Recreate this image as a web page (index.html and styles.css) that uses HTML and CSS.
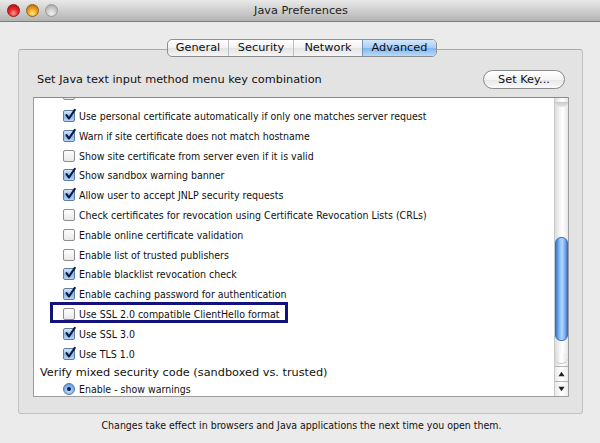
FILE: index.html
```html
<!DOCTYPE html>
<html>
<head>
<meta charset="utf-8">
<link rel="stylesheet" href="styles.css">
</head>
<body>
<div class="window">
  <div class="titlebar">
    <div class="lights">
      <span class="light red"></span>
      <span class="light orange"></span>
      <span class="light gray"></span>
    </div>
    <div class="title">Java Preferences</div>
  </div>
  <div class="content">
    <div class="tabs">
      <div class="tab t1">General</div>
      <div class="tab t2">Security</div>
      <div class="tab t3">Network</div>
      <div class="tab t4 sel">Advanced</div>
    </div>
    <div class="group">
      <div class="keyrow">
        <span class="keylabel">Set Java text input method menu key combination</span>
        <button class="btn">Set Key...</button>
      </div>
      <div class="list">
        <div class="items">
          <div class="row first"><span class="cb"></span></div>
          <div class="row"><span class="cb on"><svg viewBox="0 0 14 14"><path d="M3.5 7.2 L6 10.5 L11.8 1.8" /></svg></span><span>Use personal certificate automatically if only one matches server request</span></div>
          <div class="row"><span class="cb on"><svg viewBox="0 0 14 14"><path d="M3.5 7.2 L6 10.5 L11.8 1.8" /></svg></span><span>Warn if site certificate does not match hostname</span></div>
          <div class="row"><span class="cb"></span><span>Show site certificate from server even if it is valid</span></div>
          <div class="row"><span class="cb on"><svg viewBox="0 0 14 14"><path d="M3.5 7.2 L6 10.5 L11.8 1.8" /></svg></span><span>Show sandbox warning banner</span></div>
          <div class="row"><span class="cb on"><svg viewBox="0 0 14 14"><path d="M3.5 7.2 L6 10.5 L11.8 1.8" /></svg></span><span>Allow user to accept JNLP security requests</span></div>
          <div class="row"><span class="cb"></span><span>Check certificates for revocation using Certificate Revocation Lists (CRLs)</span></div>
          <div class="row"><span class="cb"></span><span>Enable online certificate validation</span></div>
          <div class="row"><span class="cb"></span><span>Enable list of trusted publishers</span></div>
          <div class="row"><span class="cb on"><svg viewBox="0 0 14 14"><path d="M3.5 7.2 L6 10.5 L11.8 1.8" /></svg></span><span>Enable blacklist revocation check</span></div>
          <div class="row"><span class="cb on"><svg viewBox="0 0 14 14"><path d="M3.5 7.2 L6 10.5 L11.8 1.8" /></svg></span><span>Enable caching password for authentication</span></div>
          <div class="row hl"><span class="cb"></span><span>Use SSL 2.0 compatible ClientHello format</span></div>
          <div class="row"><span class="cb on"><svg viewBox="0 0 14 14"><path d="M3.5 7.2 L6 10.5 L11.8 1.8" /></svg></span><span>Use SSL 3.0</span></div>
          <div class="row"><span class="cb on"><svg viewBox="0 0 14 14"><path d="M3.5 7.2 L6 10.5 L11.8 1.8" /></svg></span><span>Use TLS 1.0</span></div>
          <div class="heading">Verify mixed security code (sandboxed vs. trusted)</div>
          <div class="row radio-row"><span class="radio"><span class="dot"></span></span><span>Enable - show warnings</span></div>
        </div>
        <div class="scrollbar">
          <div class="track">
            <div class="cap"></div>
            <div class="thumb"></div>
            <div class="trackend"></div>
          </div>
          <div class="arrow up"><svg viewBox="0 0 8 6"><path d="M4 0.5 L7.5 5.5 L0.5 5.5 Z"/></svg></div>
          <div class="arrow down"><svg viewBox="0 0 8 6"><path d="M0.5 0.5 L7.5 0.5 L4 5.5 Z"/></svg></div>
        </div>
      </div>
    </div>
    <div class="footer">Changes take effect in browsers and Java applications the next time you open them.</div>
  </div>
</div>
</body>
</html>
```

FILE: styles.css
```css
html, body {
  margin: 0;
  padding: 0;
}
body {
  width: 600px;
  height: 443px;
  overflow: hidden;
  background: #ebebeb;
  font-family: "DejaVu Sans", "Liberation Sans", sans-serif;
  color: #111;
}
.window {
  width: 600px;
  height: 443px;
  display: flex;
  flex-direction: column;
}
.titlebar {
  height: 21px;
  border-bottom: 1px solid #7c7c7c;
  background: linear-gradient(#e9e9e9, #cfcfcf 50%, #b3b3b3);
  position: relative;
  display: flex;
  align-items: center;
  justify-content: center;
}
.lights {
  position: absolute;
  left: 7px;
  top: 4px;
  display: flex;
  gap: 6px;
}
.light {
  width: 13px;
  height: 13px;
  border-radius: 50%;
  box-sizing: border-box;
}
.light.red {
  background: radial-gradient(circle at 50% 75%, #ff9a8a 0%, #e8262a 45%, #9a0e10 100%);
  border: 1px solid #8c1a1a;
}
.light.orange {
  background: radial-gradient(circle at 50% 75%, #ffe98a 0%, #f0a21c 45%, #a46407 100%);
  border: 1px solid #946019;
}
.light.gray {
  background: radial-gradient(circle at 50% 75%, #f2f2f2 0%, #c9c9c9 50%, #9d9d9d 100%);
  border: 1px solid #989898;
}
.title {
  font-size: 11.3px;
  color: #222;
  padding-left: 2px;
}
.content {
  flex: 1;
  display: flex;
  flex-direction: column;
  padding: 17px 17px 0 18px;
}
.tabs {
  display: flex;
  align-self: center;
  margin-left: 3px;
  height: 18px;
  margin-bottom: -8px;
  position: relative;
  z-index: 2;
  border: 1px solid #8e8e8e;
  border-radius: 5px;
  overflow: hidden;
  box-sizing: border-box;
  background: linear-gradient(#ffffff, #f1f1f1 50%, #e3e3e3 51%, #f5f5f5);
}
.tab {
  font-size: 11.3px;
  line-height: 16px;
  text-align: center;
  border-left: 1px solid #bdbdbd;
  color: #111;
  box-sizing: border-box;
}
.t1 { width: 60px; border-left: none; }
.t2 { width: 65px; }
.t3 { width: 69px; }
.t4 { width: 74px; }
.tab.sel {
  background: linear-gradient(#d4e6fa, #a6cdf4 50%, #7fb6ef 51%, #b8dbfa);
  border-left: 1px solid #6f95c4;
}
.group {
  height: 365px;
  box-sizing: border-box;
  border: 1px solid #c2c2c2;
  border-top-color: #ababab;
  border-radius: 3px;
  background: #e3e3e3;
  padding: 20px 17px 0 14px;
  display: flex;
  flex-direction: column;
}
.keyrow {
  display: flex;
  align-items: center;
  justify-content: space-between;
  height: 19px;
  padding-left: 4px;
}
.keylabel {
  font-size: 11.3px;
}
.btn {
  font-family: inherit;
  font-size: 11.3px;
  height: 19px;
  width: 82px;
  padding: 0;
  border: 1px solid #8a8a8a;
  border-radius: 10px;
  background: linear-gradient(#ffffff, #f4f4f4 50%, #e6e6e6 51%, #fafafa);
  color: #111;
}
.list {
  margin-top: 8px;
  margin-right: -4px;
  height: 300px;
  box-sizing: border-box;
  border: 1px solid #9d9d9d;
  border-top-color: #8a8a8a;
  background: #fff;
  display: flex;
  overflow: hidden;
}
.items {
  flex: 1;
  margin-top: -12.5px;
  overflow: hidden;
}
.row {
  height: 19.8px;
  display: flex;
  align-items: center;
  font-family: "DejaVu Sans Condensed", "DejaVu Sans", sans-serif;
  font-size: 10.5px;
  padding-left: 29px;
  gap: 4px;
  position: relative;
}
.row.first {
  height: 20.6px;
  align-items: flex-start;
  padding-top: 2.5px;
  box-sizing: border-box;
}
.cb {
  width: 12px;
  height: 12px;
  box-sizing: border-box;
  border: 1px solid #8d8d8d;
  border-radius: 2px;
  background: linear-gradient(#fdfdfd, #e9e9e9);
  position: relative;
  flex: none;
}
.cb.on {
  border-color: #5f7ca0;
  background: linear-gradient(#d6e6f8, #8fb9e8 55%, #b7d5f5);
}
.cb svg {
  position: absolute;
  left: -1px;
  top: -3px;
  width: 14px;
  height: 14px;
  overflow: visible;
}
.cb svg path {
  fill: none;
  stroke: #0c1b46;
  stroke-width: 2.1;
  stroke-linecap: round;
  stroke-linejoin: round;
}
.row.hl::after {
  content: "";
  position: absolute;
  left: 16px;
  top: -2px;
  width: 238px;
  height: 21px;
  border: 3px solid #12127e;
  box-sizing: border-box;
}
.heading {
  font-size: 11.3px;
  height: 18px;
  display: flex;
  align-items: center;
  padding-left: 6px;
}
.radio-row {
  height: 16px;
}
.radio {
  width: 12px;
  height: 12px;
  box-sizing: border-box;
  border-radius: 50%;
  border: 1px solid #5677a3;
  background: radial-gradient(circle at 50% 70%, #c7e0fa, #6ea7e6 70%, #4f86cc);
  display: flex;
  align-items: center;
  justify-content: center;
  flex: none;
}
.radio .dot {
  width: 4px;
  height: 4px;
  border-radius: 50%;
  background: #0d1b3e;
}
.scrollbar {
  width: 13px;
  flex: none;
  display: flex;
  flex-direction: column;
  border-left: 1px solid #c9c9c9;
  background: linear-gradient(90deg, #dcdcdc, #f7f7f7 40%, #ffffff 60%, #e6e6e6);
}
.track {
  flex: 1;
  display: flex;
  flex-direction: column;
}
.cap {
  height: 5px;
  margin-top: 4px;
  background: linear-gradient(#c8c8c8, #e8e8e8);
  border-radius: 0 0 6px 6px;
}
.thumb {
  margin-top: 130px;
  height: 104px;
  border-radius: 6px;
  border: 1px solid #3a6fc0;
  box-sizing: border-box;
  background: linear-gradient(90deg, #3d78d6, #8ec0f4 35%, #b4d7fb 55%, #6fa7ec 85%, #3f75cc);
}
.trackend {
  margin-top: auto;
  height: 10px;
  border-radius: 0 0 6px 6px;
  background: linear-gradient(90deg, #d8d8d8, #ffffff 50%, #e2e2e2);
  border-bottom: 1px solid #c8c8c8;
  margin-bottom: 2px;
}
.arrow {
  height: 15px;
  box-sizing: border-box;
  border-top: 1px solid #b5b5b5;
  display: flex;
  align-items: center;
  justify-content: center;
  background: linear-gradient(90deg, #e9e9e9, #ffffff 50%, #ececec);
}
.arrow svg {
  width: 7px;
  height: 6px;
}
.arrow svg path {
  fill: #222;
}
.footer {
  text-align: center;
  font-family: "DejaVu Sans Condensed", "DejaVu Sans", sans-serif;
  font-size: 10.5px;
  margin-top: 4px;
  padding-left: 2px;
  line-height: 14px;
  color: #111;
}
```
